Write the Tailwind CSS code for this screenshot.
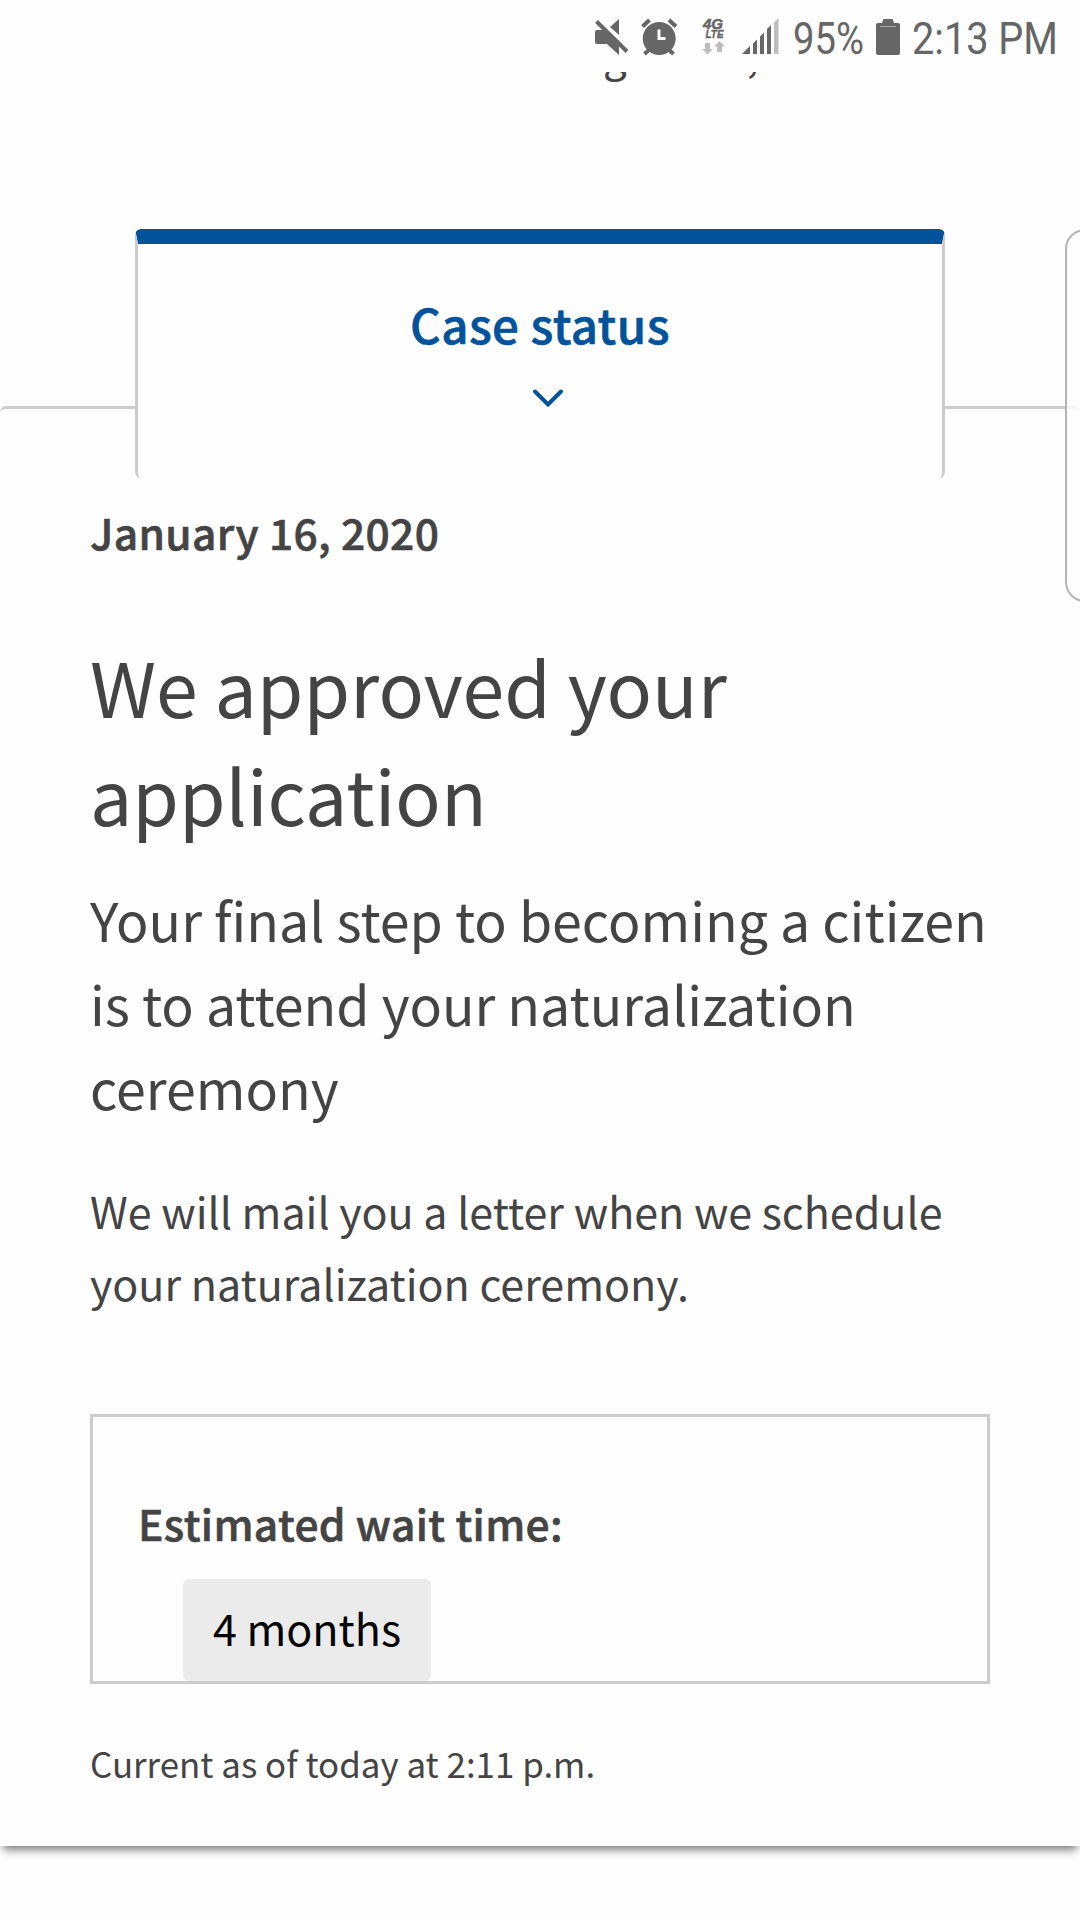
<!DOCTYPE html>
<html lang="en">
<head>
  <meta charset="UTF-8" />
  <meta name="viewport" content="width=device-width, initial-scale=1.0" />
  <title>Case status</title>
  <script src="https://cdn.jsdelivr.net/npm/@tailwindcss/browser@4"></script>
  <style>
    body {
      font-family: 'Noto Sans CJK SC', 'Noto Sans', sans-serif;
    }
    /* between medium and bold */
    .semi {
      -webkit-text-stroke: 0.6px currentColor;
    }
  </style>
</head>
<body class="relative w-[1080px] h-[1920px] overflow-hidden bg-[#fefefe] text-[#444]">

  <!-- Phone status bar -->
  <header class="h-[72px]">
    <svg class="block w-full h-full" viewBox="0 0 1080 72" fill="#666">
      <!-- muted speaker -->
      <path d="M595 32q0-2 2-2h6l16 16v9l-12-11h-10q-2 0-2-2zM619 19v16l-9-8z" />
      <path d="M596.500 21.500L627 51.500" stroke="#666" stroke-width="4" />
      <!-- alarm clock -->
      <circle cx="659.200" cy="38.500" r="16.500" />
      <path d="M642.500 26.500l7-6.500M676 26.500l-7-6.500M650 49l-5.500 5M668 49l5.500 5" stroke="#666" stroke-width="4" />
      <path d="M659 29.500v9h6.500" fill="none" stroke="#fefefe" stroke-width="3" />
      <!-- network type -->
      <text x="703" y="28.500" font-family="Liberation Sans" font-size="15" font-weight="700" font-style="italic" stroke="#666" stroke-width="0.600" textLength="20" lengthAdjust="spacingAndGlyphs">4G</text>
      <text x="705.500" y="38" font-family="Liberation Sans" font-size="11.500" font-weight="700" font-style="italic" stroke="#666" stroke-width="0.400" textLength="18" lengthAdjust="spacingAndGlyphs">LTE</text>
      <path d="M705 43h5v6h3l-5.500 5.500L702 49h3zM717 52h5v-5.500h3L719.500 41L714 46.500h3z" fill="#bdbdbd" />
      <!-- signal strength -->
      <path d="M742 54l8-8v8zM753 43.500l4-4V54h-4zM760 36.500l4-4V54h-4zM767 29l4-4v29h-4z" />
      <path d="M774 22.500l4.500-4.500v36H774z" fill="#bdbdbd" />
      <text x="793" y="54" font-family="Roboto" font-size="45" textLength="71" lengthAdjust="spacingAndGlyphs">95%</text>
      <!-- battery -->
      <path d="M882 23l1.500-4h9l1.500 4h4q2 0 2 2v28q0 2-2 2h-20q-2 0-2-2V25q0-2 2-2z" />
      <path d="M880 26.500h16" stroke="#aaa" stroke-width="1" />
      <text x="912" y="54" font-family="Roboto" font-size="45" textLength="146" lengthAdjust="spacingAndGlyphs">2:13 PM</text>
    </svg>
  </header>

  <!-- Last line of the paragraph scrolled under the status bar -->
  <div class="flex h-[18px] items-end overflow-hidden pl-[603px] text-[42px]">
    <p class="flex h-[72px] gap-[120px] leading-[72px] mb-[1px]"><span>g</span><span>,</span></p>
  </div>

  <main class="mt-[139px]">
    <!-- Tab -->
    <section class="relative z-10 mx-auto flex h-[249px] w-[810px] flex-col items-center rounded-md border-x-3 border-t-15 border-x-[#ccc] border-t-[#00539b] bg-[#fefefe] text-[#00539b]">
      <h2 class="semi mt-[44px] text-[47.5px] leading-[72px] font-medium tracking-[0.4px]">Case status</h2>
      <svg class="mt-[28px] ml-[15px] h-5 w-8" viewBox="0 0 32 20" fill="none" stroke="#00539b" stroke-width="4" stroke-linecap="round">
        <path d="M3 3.500L16 16.500L29 3.500" />
      </svg>
    </section>

    <!-- Card -->
    <section class="-mt-[72px] h-[1440px] rounded-t-md border-t-3 border-[#ccc] bg-[#fefefe] px-[90px] pt-[87px] shadow-[0_7px_8px_-3px_rgba(0,0,0,0.5)]">
      <p class="semi text-[42.5px] leading-[72px] font-medium tracking-[0.35px]">January 16, 2020</p>
      <h1 class="mt-[64px] text-[75.2px] leading-[108px]">We approved your<br>application</h1>
      <h3 class="mt-[29px] text-[53.7px] leading-[84px] whitespace-nowrap">Your final step to becoming a citizen<br>is to attend your naturalization<br>ceremony</h3>
      <p class="mt-[45px] text-[43px] leading-[72px] whitespace-nowrap">We will mail you a letter when we schedule<br>your naturalization ceremony.</p>
      <div class="mt-[96px] h-[270px] border-3 border-[#ccc] pt-[70px] pl-[45px]">
        <p class="semi text-[42.5px] leading-[72px] font-medium tracking-[0.35px]">Estimated wait time:</p>
        <div class="mt-5 ml-[45px] flex h-[102px] w-[248px] justify-center rounded-md bg-[#ebebeb] text-[43px] leading-[96px] text-black">4 months</div>
      </div>
      <p class="mt-[49px] text-[34.9px] leading-[60px]">Current as of today at 2:11 p.m.</p>
    </section>
  </main>

  <!-- Edge panel handle -->
  <div class="absolute top-[229px] left-[1065px] z-20 h-[373px] w-10 rounded-[20px] border-2 border-[#b4b4b4] bg-[#fefefe]/80"></div>

</body>
</html>
